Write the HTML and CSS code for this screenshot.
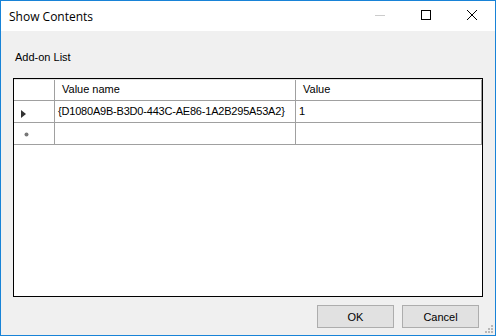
FILE: index.html
```html
<!DOCTYPE html>
<html lang="en">
<head>
  <meta charset="UTF-8" />
  <title>Show Contents</title>
  <link rel="stylesheet" href="styles.css">
</head>
<body>

<div class="window">
  <div class="titlebar">
    <span class="title">Show Contents</span>
    <div class="caption">
      <span class="cap-btn">
        <svg width="10" height="10"><rect x="0" y="5" width="10" height="1" fill="#cccccc"/></svg>
      </span>
      <span class="cap-btn">
        <svg width="10" height="10"><rect x="0.5" y="0.5" width="9" height="9" fill="none" stroke="#000"/></svg>
      </span>
      <span class="cap-btn">
        <svg width="10" height="10"><path d="M0 0 L10 10 M10 0 L0 10" stroke="#000" stroke-width="1"/></svg>
      </span>
    </div>
  </div>

  <div class="body">
    <div class="label">Add-on List</div>

    <div class="grid">
      <div class="row head">
        <div class="cell rowhead"></div>
        <div class="cell">Value name</div>
        <div class="cell">Value</div>
      </div>
      <div class="row">
        <div class="cell rowhead">
          <svg class="arrow" width="5" height="8"><path d="M0 0 L5 4 L0 8Z" fill="#333"/></svg>
        </div>
        <div class="cell data">{D1080A9B-B3D0-443C-AE86-1A2B295A53A2}</div>
        <div class="cell data">1</div>
      </div>
      <div class="row">
        <div class="cell rowhead">
          <svg class="star" width="5" height="5"><circle cx="2.5" cy="2.5" r="2" fill="#777"/></svg>
        </div>
        <div class="cell data"></div>
        <div class="cell data"></div>
      </div>
    </div>

    <div class="buttons">
      <button class="btn">OK</button>
      <button class="btn">Cancel</button>
    </div>
  </div>

  <!-- size grip -->
  <svg class="grip" width="10" height="10">
    <rect x="7" y="7" width="2" height="2" fill="#b8b8b8"/>
    <rect x="4" y="7" width="2" height="2" fill="#b8b8b8"/>
    <rect x="1" y="7" width="2" height="2" fill="#b8b8b8"/>
    <rect x="7" y="4" width="2" height="2" fill="#b8b8b8"/>
    <rect x="4" y="4" width="2" height="2" fill="#b8b8b8"/>
    <rect x="7" y="1" width="2" height="2" fill="#b8b8b8"/>
  </svg>
</div>

</body>
</html>
```

FILE: styles.css
```css
:root {
  --frame:#1883d7; --face:#f0f0f0; --line:#a0a0a0;
}
body{margin:0;font-family:"Liberation Sans",Arial,sans-serif;font-size:11px;color:#000}
.window{position:relative;box-sizing:border-box;width:496px;height:336px;border:1px solid var(--frame);
        background:var(--face);display:flex;flex-direction:column}

.titlebar{height:30px;background:#fff;display:flex;align-items:center;flex-shrink:0}
.title{padding-left:8px;font-family:"Open Sans","Noto Sans",sans-serif;font-size:12px;flex:1}
.caption{display:flex;height:30px}
.cap-btn{width:46px;height:30px;box-sizing:border-box;padding-bottom:2px;
         display:flex;align-items:center;justify-content:center}
.cap-btn svg{display:block}

.body{flex:1;display:flex;flex-direction:column;padding:20px 12px 7px 12px}
.label{line-height:13px;margin-left:2px}

.grid{margin-top:14px;height:219px;box-sizing:border-box;border:1px solid #000;background:#fff}
.row{display:grid;grid-template-columns:41px 241px 186px;height:22px}
.row.head{height:21px;border-top:1px solid #e3e3e3}
.cell{border-right:1px solid var(--line);border-bottom:1px solid var(--line);
      line-height:20px;padding-left:7px;white-space:nowrap;overflow:hidden}
.row.head .cell{line-height:19px}
.cell.data{line-height:21px;padding-left:3px;letter-spacing:-0.2px}
.rowhead{padding-left:7px}
.arrow{display:block;margin-top:9px}
.star{display:block;margin:9px 0 0 3px}

.buttons{margin-top:auto;display:flex;justify-content:flex-end;gap:8px;padding-right:4px}
.btn{width:77px;height:23px;box-sizing:border-box;background:#e1e1e1;border:1px solid #adadad;
     font-family:"Liberation Sans",Arial,sans-serif;font-size:11px;color:#000;padding:0}

.grip{position:absolute;right:1px;bottom:1px}
```
